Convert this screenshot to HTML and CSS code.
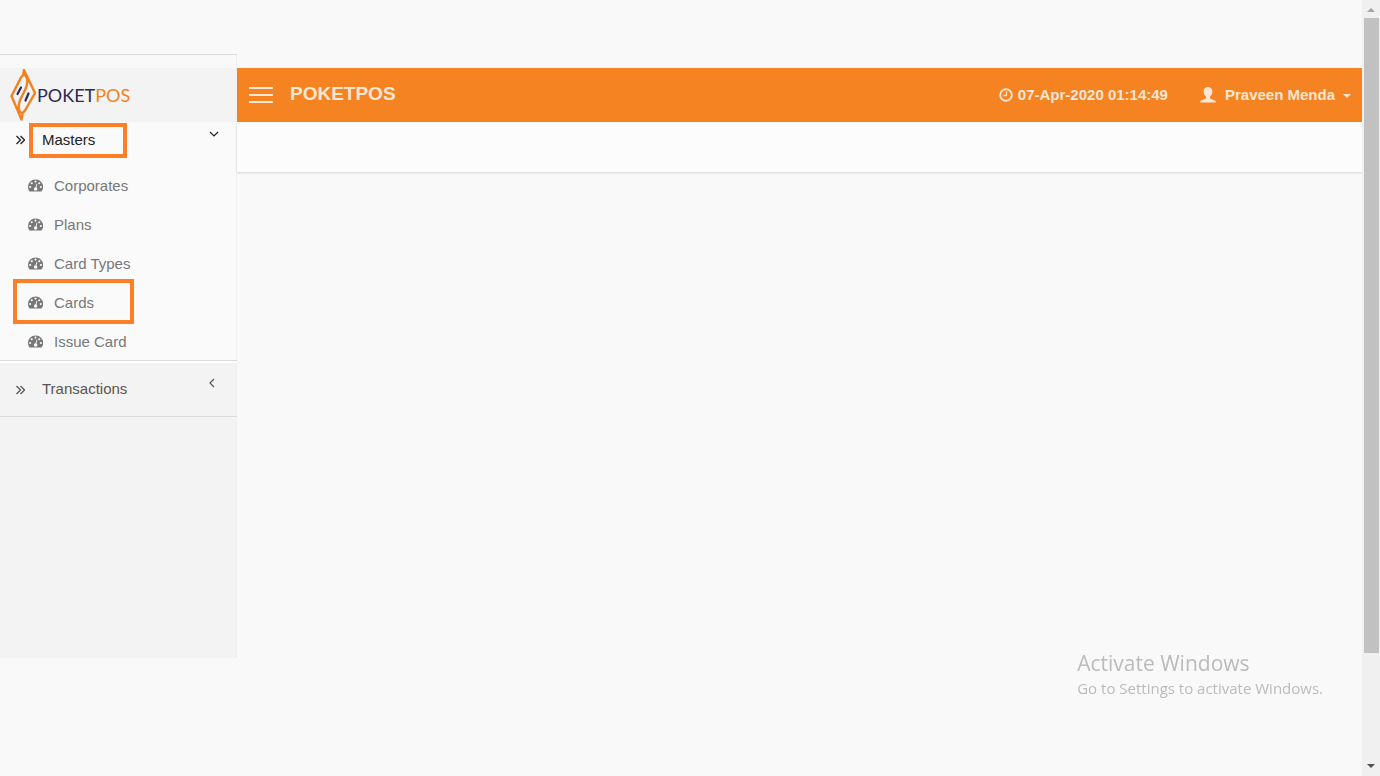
FILE: index.html
```
<!DOCTYPE html>
<html lang="en">
<head>
    <meta charset="UTF-8">
    <meta name="viewport" content="width=device-width, initial-scale=1.0">
    <title>POKETPOS</title>
    <link rel="stylesheet" href="styles.css">
</head>
<body>
    <svg class="sprite" aria-hidden="true">
        <symbol id="gauge" viewBox="0 0 16 13">
            <path fill="currentColor" fill-rule="evenodd" d="M8 0a8 8 0 0 0-8 8c0 1.600.4 3.100 1.200 4.400.2.400.6.600 1 .6h11.600c.4 0 .8-.2 1-.6A8 8 0 0 0 8 0zM8 1.200a1.150 1.150 0 1 1 0 2.300 1.150 1.150 0 0 1 0-2.300zM4 2.900a1.150 1.150 0 1 1 0 2.300 1.150 1.150 0 0 1 0-2.300zM12 2.900a1.150 1.150 0 1 1 0 2.300 1.150 1.150 0 0 1 0-2.300zM2.300 6.900a1.150 1.150 0 1 1 0 2.300 1.150 1.150 0 0 1 0-2.300zM13.700 6.900a1.150 1.150 0 1 1 0 2.300 1.150 1.150 0 0 1 0-2.300zM9.100 4.500l.9.200-1 3.900a1.800 1.800 0 1 1-1-.2z"/>
        </symbol>
        <symbol id="double-right" viewBox="0 0 10 10">
            <path fill="none" stroke="currentColor" stroke-width="1.300" d="M1.500 1l4 4-4 4M5.500 1l4 4-4 4"/>
        </symbol>
    </svg>
    <div class="page">
        <nav class="sidebar">
            <a class="logo" href="#">
                <svg class="logo-mark" viewBox="0 0 26 52" aria-hidden="true">
                    <path fill="none" stroke="#f48120" stroke-width="2.400" stroke-linejoin="round" stroke-linecap="round" d="M12.500 45l-1 5.500L1.500 27 11 8.500Q14 4 16.500 8 18.500 13 15.500 20L10.500 30Q7.500 37 9.500 42 12 46 15 41.500L25 24 14 1l-.8 5"/>
                    <path fill="none" stroke="#2d2a55" stroke-width="2.200" stroke-linecap="round" d="M7.500 25l3.500-6.500M15.500 31.500l3-7"/>
                </svg>
                <span class="logo-text">POKET<span class="logo-accent">POS</span></span>
            </a>
            <ul class="menu">
                <li class="menu-item active">
                    <a class="menu-link" href="#">
                        <svg class="arrows" aria-hidden="true"><use href="#double-right"/></svg>
                        <span class="menu-title marked">Masters</span>
                        <svg class="chevron" viewBox="0 0 10 10" aria-hidden="true"><path d="M1 3l4 4 4-4"/></svg>
                    </a>
                    <ul class="submenu">
                        <li><a class="submenu-link" href="#"><svg class="gauge" aria-hidden="true"><use href="#gauge"/></svg>Corporates</a></li>
                        <li><a class="submenu-link" href="#"><svg class="gauge" aria-hidden="true"><use href="#gauge"/></svg>Plans</a></li>
                        <li><a class="submenu-link" href="#"><svg class="gauge" aria-hidden="true"><use href="#gauge"/></svg>Card Types</a></li>
                        <li><a class="submenu-link marked" href="#"><svg class="gauge" aria-hidden="true"><use href="#gauge"/></svg>Cards</a></li>
                        <li><a class="submenu-link" href="#"><svg class="gauge" aria-hidden="true"><use href="#gauge"/></svg>Issue Card</a></li>
                    </ul>
                </li>
                <li class="menu-item">
                    <a class="menu-link" href="#">
                        <svg class="arrows" aria-hidden="true"><use href="#double-right"/></svg>
                        <span class="menu-title">Transactions</span>
                        <svg class="chevron" viewBox="0 0 10 10" aria-hidden="true"><path d="M5 1L1 5l4 4"/></svg>
                    </a>
                </li>
            </ul>
        </nav>
        <main class="content">
            <header class="topbar">
                <button class="toggle" type="button" aria-label="Toggle menu">
                    <span></span><span></span><span></span>
                </button>
                <h1 class="brand">POKETPOS</h1>
                <div class="clock">
                    <svg class="clock-icon" viewBox="0 0 14 14" aria-hidden="true">
                        <circle cx="7" cy="7" r="5.800" fill="none" stroke="currentColor" stroke-width="1.900"/>
                        <path fill="none" stroke="currentColor" stroke-width="1.300" d="M7.500 3.500v4H4.500"/>
                    </svg>
                    <span>07-Apr-2020 01:14:49</span>
                </div>
                <button class="user" type="button">
                    <svg class="user-icon" viewBox="0 0 16 16" aria-hidden="true">
                        <path fill="currentColor" d="M8 0C5.300 0 3.600 1.600 3.600 4.300c0 2 .8 4.200 2.300 5.300v1.200c0 .6-.4.900-1 1.200L1.300 13.500C.4 13.900.3 14.400.3 15.500h15.400c0-1.100-.1-1.600-1-2L11.100 12c-.6-.3-1-.6-1-1.200V9.600c1.500-1.100 2.300-3.300 2.300-5.300C12.400 1.600 10.700 0 8 0z"/>
                    </svg>
                    <span>Praveen Menda</span>
                    <span class="caret"></span>
                </button>
            </header>
            <div class="subbar"></div>
        </main>
        <div class="scrollbar" aria-hidden="true">
            <span class="scroll-arrow up"></span>
            <div class="scroll-track">
                <div class="scroll-thumb"></div>
                <div class="scroll-rest"></div>
            </div>
            <span class="scroll-arrow down"></span>
        </div>
    </div>
    <div class="watermark">
        <p class="watermark-title">Activate Windows</p>
        <p class="watermark-text">Go to Settings to activate Windows.</p>
    </div>
</body>
</html>
```
FILE: styles.css
```
* {
    box-sizing: border-box;
}
body {
    margin: 0;
    background: #f9f9f9;
    color: #555;
    font-family: "Liberation Sans", Arial, sans-serif;
    font-size: 15px;
    line-height: 20px;
}
a {
    color: inherit;
    text-decoration: none;
}
button {
    background: none;
    border: none;
    padding: 0;
    color: inherit;
    font: inherit;
    cursor: pointer;
}
ul {
    list-style: none;
    margin: 0;
    padding: 0;
}
svg {
    flex: none;
}
.sprite {
    display: none;
}
.page {
    display: flex;
    min-height: 100vh;
}

/* sidebar */
.sidebar {
    width: 237px;
    flex: none;
    margin: 54px 0 118px;
    padding-top: 13px;
    border-top: 1px solid #d9dada;
    background: linear-gradient(#f9f9f9 13px, #f3f3f3 13px);
    box-shadow: inset -1px 0 #efefef;
}
.logo {
    display: flex;
    align-items: center;
    gap: 1px;
    height: 54px;
    padding-left: 10px;
}
.logo-mark {
    width: 26px;
    height: 52px;
}
.logo-text {
    color: #2d2a55;
    font-family: Lato, "Liberation Sans", sans-serif;
    font-size: 18px;
}
.logo-accent {
    color: #f48120;
}
.menu-item {
    border-bottom: 1px solid #d9dada;
}
.menu-item + .menu-item {
    box-shadow: inset 0 2px #fdfdfd;
}
.menu-item.active {
    background: #fafafa;
    box-shadow: inset -1px 0 #f3f3f3;
}
.menu-link {
    display: flex;
    align-items: center;
    height: 55px;
    padding: 2px 18px 0 15px;
}
.active .menu-link {
    height: 36px;
    margin-bottom: 7px;
    padding-top: 0;
    color: #222;
}
.arrows {
    width: 10px;
    height: 10px;
}
.menu-title {
    margin-left: 4px;
    padding: 7px 32px 8px 13px;
}
.chevron {
    width: 10px;
    height: 10px;
    margin: 0 0 13px auto;
    fill: none;
    stroke: currentColor;
    stroke-width: 1.2;
}
.submenu {
    padding-left: 13px;
}
.submenu-link {
    display: flex;
    align-items: center;
    gap: 11px;
    width: 121px;
    height: 39px;
    padding: 2px 0 0 15px;
    color: #777;
}
.gauge {
    width: 15px;
    height: 13px;
}
.marked {
    outline: 4px solid #ff7f27;
    outline-offset: -4px;
}
.submenu .marked {
    height: 45px;
    margin: -3px 0;
}

/* content */
.content {
    flex: 1;
    min-width: 0;
    padding-top: 68px;
}
.topbar {
    display: flex;
    align-items: center;
    height: 54px;
    padding: 0 11px 0 12px;
    background: #f58322;
    color: #fde6d3;
    font-weight: bold;
}
.toggle {
    display: grid;
    gap: 5px;
    width: 24px;
}
.toggle span {
    height: 2px;
    background: #fde6d3;
}
.brand {
    margin: 0 auto 2px 17px;
    font-size: 19px;
}
.clock {
    display: flex;
    align-items: center;
    gap: 5px;
    margin-right: 32px;
}
.clock-icon {
    width: 14px;
    height: 14px;
}
.user {
    display: flex;
    align-items: center;
}
.user-icon {
    width: 16px;
    height: 16px;
    margin-right: 9px;
}
.caret {
    margin: 2px 0 0 8px;
    border: 4px solid transparent;
    border-top-color: currentColor;
    border-bottom: 0;
}
.subbar {
    height: 50px;
    background: #fcfcfc;
    box-shadow: 0 1px 2px rgba(0, 0, 0, 0.15);
}

/* scrollbar */
.scrollbar {
    display: flex;
    flex-direction: column;
    align-items: center;
    width: 18px;
    padding: 8px 0;
    background: #f0f0f0;
}
.scroll-arrow {
    border: 4px solid transparent;
}
.up {
    border-top: 0;
    border-bottom-color: #a3a3a3;
}
.down {
    border-bottom: 0;
    border-top-color: #505050;
}
.scroll-track {
    display: flex;
    flex: 1;
    flex-direction: column;
    width: 15px;
    margin: 6px 0;
}
.scroll-thumb {
    flex: 85;
    background: #c1c1c1;
}
.scroll-rest {
    flex: 14;
}

/* activation notice */
.watermark {
    position: fixed;
    right: 57px;
    bottom: 76px;
    color: #bbb;
    font-family: "Open Sans", "Noto Sans", sans-serif;
}
.watermark p {
    margin: 0;
}
.watermark-title {
    font-size: 21px;
    line-height: 26px;
}
.watermark-text {
    font-size: 15px;
    line-height: 24px;
}
```
